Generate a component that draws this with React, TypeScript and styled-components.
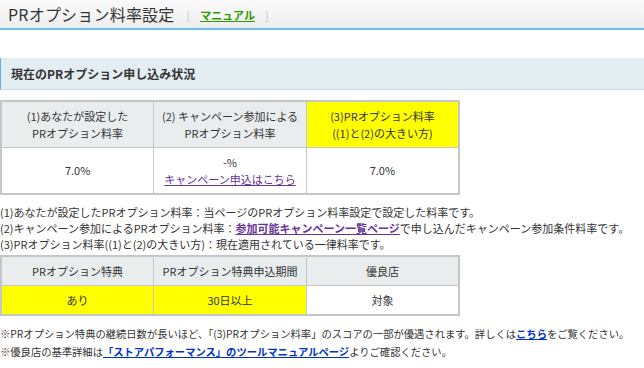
import React from 'react'
import styled, { createGlobalStyle } from 'styled-components'

const GlobalStyle = createGlobalStyle`
  body {
    margin: 0;
    background: #fff;
    color: #333;
    font-family: "Noto Sans CJK JP", "Liberation Sans", sans-serif;
    font-size: 11px;
  }
`

const Header = styled.div`
  display: flex;
  align-items: center;
  height: 28px;
  padding-left: 8px;
  background: linear-gradient(#fbfbfb, #eceeed);
  border-bottom: 2px solid #6cbdf0;
`

const Title = styled.h1`
  margin: 0;
  font-size: 16px;
  font-weight: normal;
  color: #333;
  letter-spacing: 0.2px;
`

const Bracket = styled.span`
  color: #c4c4c4;
  font-size: 11px;
  margin: 2px 0 0 12px;
  display: flex;
  gap: 10px;
`

const ManualLink = styled.a`
  color: #339900;
  font-weight: bold;
  text-decoration: underline;
`

const SectionHeading = styled.h2`
  margin: 28px 0 10px;
  height: 31px;
  display: flex;
  align-items: center;
  padding-left: 10px;
  background: #e3edf2;
  border-left: 1px solid #5fb2e8;
  border-bottom: 1px solid #c8dde5;
  font-size: 12px;
  font-weight: bold;
  color: #333;
`

const Table = styled.table`
  width: 460px;
  border-collapse: collapse;
  border: 2px solid #c3c8c6;
  table-layout: fixed;
`

const Cell = styled.td<{ $head?: boolean; $hl?: boolean; $h: number }>`
  border: 1px solid #c3c8c6;
  height: ${(p) => p.$h}px;
  padding: 0;
  text-align: center;
  vertical-align: middle;
  line-height: 17px;
  font-size: 11px;
  color: #333;
  background: ${(p) => (p.$hl ? '#ffff00' : p.$head ? '#e9eded' : '#fff')};
`

const PurpleLink = styled.a<{ $bold?: boolean }>`
  color: #663399;
  text-decoration: underline;
  font-weight: ${(p) => (p.$bold ? 'bold' : 'normal')};
`

const BlueLink = styled.a`
  color: #0033cc;
  font-weight: bold;
  text-decoration: underline;
`

const Notes = styled.div<{ $lh: number }>`
  display: flex;
  flex-direction: column;
  line-height: ${(p) => p.$lh}px;
  font-size: 11px;
  color: #333;
  white-space: nowrap;
`

const NotesBlock = styled(Notes)`
  margin: 9px 0 3px;
`

const FootBlock = styled(Notes)`
  margin: 9px 0 0 0;
  font-size: 10.3px;
`

export default function App() {
  return (
    <>
      <GlobalStyle />
      <Header>
        <Title>PRオプション料率設定</Title>
        <Bracket>
          [ <ManualLink href="#">マニュアル</ManualLink> ]
        </Bracket>
      </Header>

      <SectionHeading>現在のPRオプション申し込み状況</SectionHeading>

      <Table>
        <tbody>
          <tr>
            <Cell $head $h={45}>
              (1)あなたが設定した
              <br />
              PRオプション料率
            </Cell>
            <Cell $head $h={45}>
              (2) キャンペーン参加による
              <br />
              PRオプション料率
            </Cell>
            <Cell $hl $h={45}>
              (3)PRオプション料率
              <br />
              ((1)と(2)の大きい方)
            </Cell>
          </tr>
          <tr>
            <Cell $h={45}>7.0%</Cell>
            <Cell $h={45}>
              -%
              <br />
              <PurpleLink href="#">キャンペーン申込はこちら</PurpleLink>
            </Cell>
            <Cell $h={45}>7.0%</Cell>
          </tr>
        </tbody>
      </Table>

      <NotesBlock $lh={16}>
        <span>(1)あなたが設定したPRオプション料率：当ページのPRオプション料率設定で設定した料率です。</span>
        <span>
          (2)キャンペーン参加によるPRオプション料率：
          <PurpleLink $bold href="#">参加可能キャンペーン一覧ページ</PurpleLink>
          で申し込んだキャンペーン参加条件料率です。
        </span>
        <span>(3)PRオプション料率((1)と(2)の大きい方)：現在適用されている一律料率です。</span>
      </NotesBlock>

      <Table>
        <tbody>
          <tr>
            <Cell $head $h={28}>PRオプション特典</Cell>
            <Cell $head $h={28}>PRオプション特典申込期間</Cell>
            <Cell $head $h={28}>優良店</Cell>
          </tr>
          <tr>
            <Cell $hl $h={28}>あり</Cell>
            <Cell $hl $h={28}>30日以上</Cell>
            <Cell $h={28}>対象</Cell>
          </tr>
        </tbody>
      </Table>

      <FootBlock $lh={18}>
        <span>
          ※PRオプション特典の継続日数が長いほど、「(3)PRオプション料率」のスコアの一部が優遇されます。詳しくは
          <BlueLink href="#">こちら</BlueLink>をご覧ください。
        </span>
        <span>
          ※優良店の基準詳細は<BlueLink href="#">「ストアパフォーマンス」のツールマニュアルページ</BlueLink>
          よりご確認ください。
        </span>
      </FootBlock>
    </>
  )
}
